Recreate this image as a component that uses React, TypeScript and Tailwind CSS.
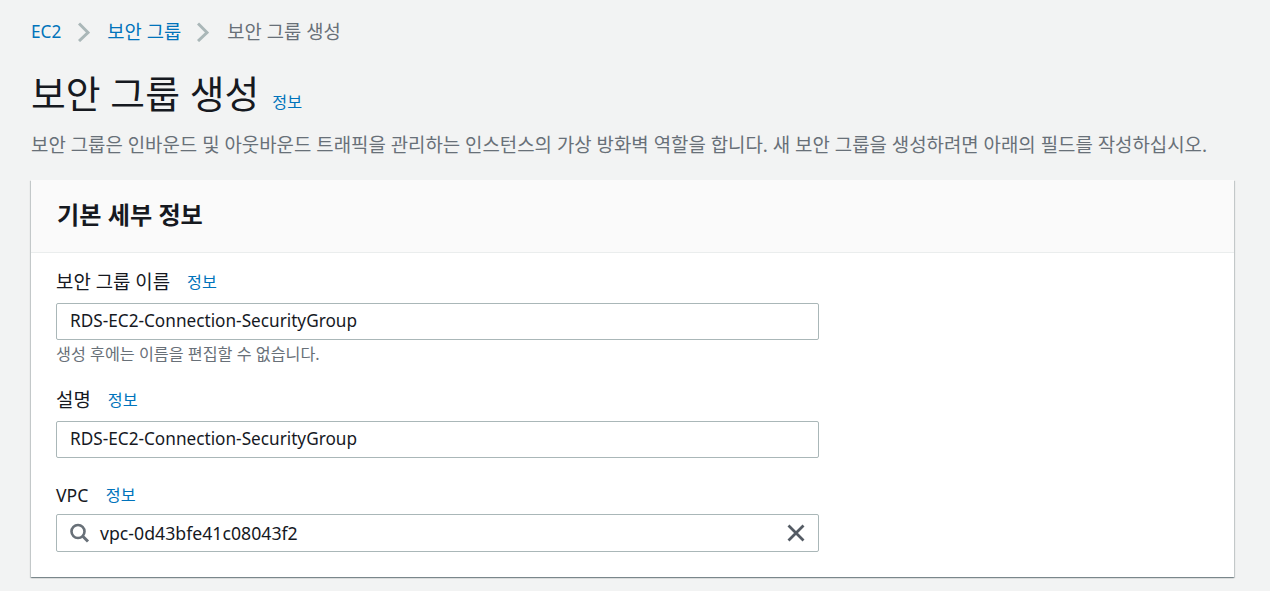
const font = "font-['Noto_Sans','Noto_Sans_CJK_KR',sans-serif]";

function Chevron() {
  return (
    <svg width="12" height="20" viewBox="0 0 12 20" className="shrink-0 block">
      <path d="M1 1.5 L10 10.5 L1 19" fill="none" stroke="#aab7b8" strokeWidth="3" />
    </svg>
  );
}

function Info({ className = "" }: { className?: string }) {
  return <a className={`text-[16.2px] leading-[22px] text-[#0073bb] ${className}`}>정보</a>;
}

function Field({ label, latin, mt, children }: { label: string; latin?: boolean; mt: string; children: React.ReactNode }) {
  return (
    <div className={mt}>
      <div className={`flex items-center h-[24px] ${latin ? "gap-[17.5px]" : "gap-[17px]"}`}>
        <span className={`${latin ? "text-[17.6px] pb-[1px]" : "text-[18.9px]"} leading-[24px] text-[#16191f]`}>{label}</span>
        <Info />
      </div>
      {children}
    </div>
  );
}

function TextBox({ value }: { value: string }) {
  return (
    <div className="mt-[9px] w-[763px] h-[37px] box-border border border-[#aab7b8] rounded-[2px] bg-white pl-[13px] pb-[2px] flex items-center text-[17.2px] text-[#16191f]">
      {value}
    </div>
  );
}

export default function App() {
  return (
    <div className={`${font} w-[1270px] h-[591px] overflow-hidden bg-[#f2f3f3] pl-[31px] pt-[20px]`}>
      <nav className="flex items-center h-[24px] leading-[24px]">
        <a className="text-[17.2px] text-[#0073bb]">EC2</a>
        <span className="mx-[17px]"><Chevron /></span>
        <a className="text-[18.8px] text-[#0073bb]">보안 그룹</a>
        <span className="ml-[16px] mr-[18px]"><Chevron /></span>
        <span className="text-[18.8px] text-[#687078]">보안 그룹 생성</span>
      </nav>
      <div className="flex items-end mt-[26px] h-[48px]">
        <h1 className="text-[37.8px] leading-[48px] font-normal text-[#16191f]">보안 그룹 생성</h1>
        <Info className="ml-[13px] mb-[5px]" />
      </div>
      <p className="mt-[15px] text-[18.9px] leading-[24px] text-[#687078] whitespace-nowrap">
        보안 그룹은 인바운드 및 아웃바운드 트래픽을 관리하는 인스턴스의 가상 방화벽 역할을 합니다. 새 보안 그룹을 생성하려면 아래의 필드를 작성하십시오.
      </p>
      <section className="mt-[23px] w-[1203px] h-[397px] bg-white shadow-[0_1px_1px_0_rgba(0,28,36,0.3),1px_1px_1px_0_rgba(0,28,36,0.15),-1px_1px_1px_0_rgba(0,28,36,0.15)]">
        <header className="h-[73px] box-border bg-[#fafafa] border-b border-[#eaeded] pl-[26px] pb-[3px] flex items-center">
          <h2 className="text-[24.15px] leading-[28px] font-bold text-[#16191f]">기본 세부 정보</h2>
        </header>
        <div className="pl-[25px]">
          <Field label="보안 그룹 이름" mt="pt-[17px]">
            <TextBox value="RDS-EC2-Connection-SecurityGroup" />
            <p className="mt-[4px] text-[16.2px] leading-[20px] text-[#687078]">생성 후에는 이름을 편집할 수 없습니다.</p>
          </Field>
          <Field label="설명" mt="mt-[24px]">
            <TextBox value="RDS-EC2-Connection-SecurityGroup" />
          </Field>
          <Field label="VPC" latin mt="mt-[25px]">
            <div className="mt-[7px] w-[763px] h-[38px] box-border border border-[#aab7b8] rounded-[2px] bg-white pl-[13px] pr-[13px] flex items-center text-[17.7px] text-[#16191f]">
              <svg width="20" height="20" viewBox="0 0 20 20" className="shrink-0">
                <circle cx="8" cy="8.5" r="6.5" fill="none" stroke="#687078" strokeWidth="2.6" />
                <path d="M12.5 13 L18 18.5" stroke="#687078" strokeWidth="3" />
              </svg>
              <span className="ml-[10px]">vpc-0d43bfe41c08043f2</span>
              <svg width="20" height="20" viewBox="0 0 20 20" className="shrink-0 ml-auto mr-[-1px]">
                <path d="M2.5 2.5 L17.5 17.5 M17.5 2.5 L2.5 17.5" stroke="#545b64" strokeWidth="2.8" />
              </svg>
            </div>
          </Field>
        </div>
      </section>
    </div>
  );
}
